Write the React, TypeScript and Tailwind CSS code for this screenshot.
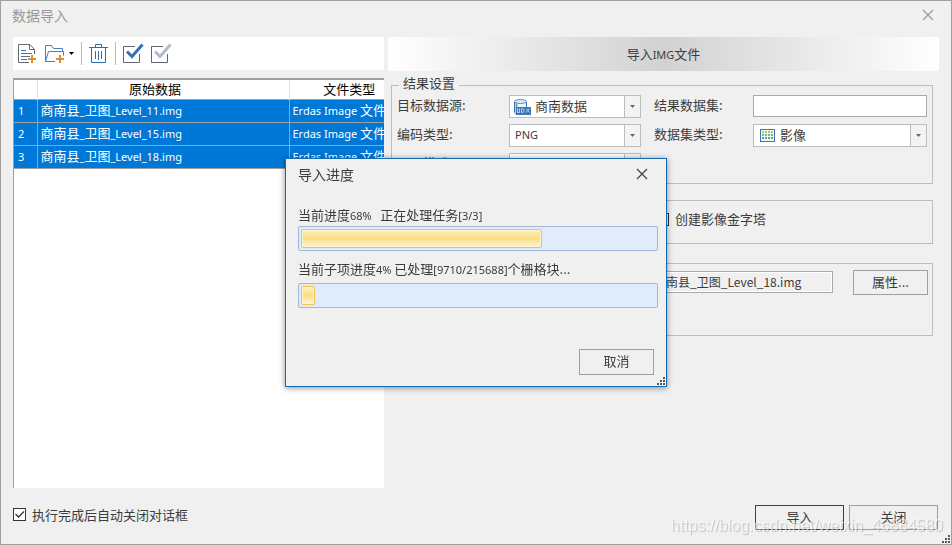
import type { ReactNode } from 'react';

const files = ['Level_11.img', 'Level_15.img', 'Level_18.img'];

function Latin({ children }: { children: ReactNode }) {
  return <span className="font-['Noto_Sans'] text-[11px]">{children}</span>;
}

function CloseIcon() {
  return (
    <svg width="12" height="12" viewBox="0 0 12 12" fill="none" stroke="currentColor" strokeWidth="1.1">
      <path d="M1 1l10 10M11 1L1 11" />
    </svg>
  );
}

function Grip() {
  return (
    <svg className="absolute right-0 bottom-0" width="9" height="9" viewBox="0 0 9 9" fill="#5a5a5a">
      <path d="M6 0h2v2H6zM3 3h2v2H3zM6 3h2v2H6zM0 6h2v2H0zM3 6h2v2H3zM6 6h2v2H6z" />
    </svg>
  );
}

function AddFileIcon() {
  return (
    <svg width="19" height="20" viewBox="0 0 19 20" fill="none">
      <path d="M16.500 10V5.500L12 .5H.5v18H11M11.500 .5v5h5" stroke="#666b73" />
      <path d="M3 6.500h5M3 9.500h11M3 12.500h9M3 15.500h6" stroke="#3f74b5" />
      <path d="M14 11v8M10 15h8" stroke="#e08e2f" strokeWidth="2" />
    </svg>
  );
}

function AddFolderIcon() {
  return (
    <svg width="20" height="20" viewBox="0 0 20 20" fill="none">
      <path d="M10 17.500H.5v-16h6l2 3h9v3M.5 17.500l3-10h15v4" stroke="#3f7fc4" />
      <path d="M15 11v8M11 15h8" stroke="#e08e2f" strokeWidth="2" />
    </svg>
  );
}

function TrashIcon() {
  return (
    <svg width="19" height="20" viewBox="0 0 19 20" fill="none" stroke="#2f6cad">
      <path d="M0 3.500h19M6.500 3V.5h6V3M2.500 4v14.500h14V4M6.500 7v8M9.500 7v9M12.500 7v8" />
    </svg>
  );
}

function CheckBoxIcon({ color }: { color: string }) {
  return (
    <svg width="21" height="21" viewBox="0 0 21 21" fill="none">
      <path d="M12 3.500H.5v16h16V11" stroke="#5d6672" />
      <path d="M4 8.500l5 5L19.500 1.500" stroke={color} strokeWidth="3" />
    </svg>
  );
}

function DatabaseIcon() {
  return (
    <svg width="17" height="16" viewBox="0 0 17 16" fill="none">
      <path d="M.5 3v10c0 1.500 3 2 5 2h7V3z" fill="#eef5fc" />
      <path d="M1.500 3v9c0 1 1 2 2 2V5z" fill="#6f9fd0" />
      <path d="M.5 3v10c0 1 1 2 2 2M12.500 3v6" stroke="#3f74b5" />
      <ellipse cx="6.500" cy="2.500" rx="6" ry="2" fill="#dceaf7" stroke="#5a8cc4" />
      <path d="M2 8h15v8H2z" fill="#3f74b5" />
      <path d="M3.500 9.500v4h2v-4M7.500 9.500v4h1l1.500-1v-2l-1.500-1zM12 9.500l3.500 4M15.500 9.500l-3.500 4" stroke="#b9d0ea" />
    </svg>
  );
}

function ImageGridIcon() {
  return (
    <svg className="ml-0.5" width="15" height="13" viewBox="0 0 15 13" fill="none">
      <rect x=".5" y=".5" width="14" height="12" fill="#f3faf0" stroke="#3f74b5" />
      <path d="M2 3h11" stroke="#9fce6a" strokeWidth="2" strokeDasharray="2 1" />
      <path d="M2 6h11" stroke="#7dbb8a" strokeWidth="2" strokeDasharray="2 1" />
      <path d="M2 9h11" stroke="#5b9fae" strokeWidth="2" strokeDasharray="2 1" />
    </svg>
  );
}

function CheckField({ children }: { children: ReactNode }) {
  return (
    <label className="flex items-center gap-1.5">
      <span className="relative flex">
        <input type="checkbox" defaultChecked className="size-[13px] appearance-none border border-[#333] bg-white" />
        <svg className="pointer-events-none absolute inset-0" width="13" height="13" viewBox="0 0 13 13" fill="none">
          <path d="M2.500 6l3 3L11 3.500" stroke="#333" strokeWidth="1.300" />
        </svg>
      </span>
      {children}
    </label>
  );
}

interface ComboProps {
  id: string;
  value: string;
  icon?: ReactNode;
  selectClass: string;
}

function Combo({ id, value, icon, selectClass }: ComboProps) {
  return (
    <div className="relative flex h-[23px] border border-[#bdbdbd] bg-white">
      <span className="pointer-events-none absolute inset-y-0 left-1 flex items-center">{icon}</span>
      <select id={id} className={`w-full appearance-none pb-0.5 outline-none ${selectClass}`}>
        <option>{value}</option>
      </select>
      <span className="pointer-events-none absolute inset-y-0 right-0 flex w-4 items-center justify-center border-l border-[#bdbdbd] bg-[#f3f3f3]">
        <svg width="5" height="3" viewBox="0 0 5 3" fill="#666">
          <path d="M0 0h5L2.500 3z" />
        </svg>
      </span>
    </div>
  );
}

function Progress({ label, percent }: { label: string; percent: number }) {
  return (
    <div
      role="progressbar"
      aria-label={label}
      aria-valuenow={percent}
      className="h-[25px] rounded-xs border border-[#a5b7d6] bg-[#e0ecfb] p-0.5"
    >
      <div
        className="h-full rounded-xs border border-[#ecc457] bg-linear-to-b from-[#fdf0c0] via-[#f9de82] to-[#fef6dc] inset-ring inset-ring-[#fff3cc]"
        style={{ width: `${percent}%` }}
      />
    </div>
  );
}

function FilePanel() {
  return (
    <div className="flex w-[371px] shrink-0 flex-col gap-2">
      <div className="flex h-[33px] items-center bg-white pl-[5px]">
        <button aria-label="添加文件"><AddFileIcon /></button>
        <button aria-label="添加文件夹" className="ml-2 flex items-center gap-1">
          <AddFolderIcon />
          <svg width="5" height="3" viewBox="0 0 5 3"><path d="M0 0h5L2.500 3z" /></svg>
        </button>
        <span className="ml-[7px] h-[23px] w-px bg-[#bbb]" />
        <button aria-label="删除" className="ml-[7px]"><TrashIcon /></button>
        <span className="ml-[7px] h-[23px] w-px bg-[#bbb]" />
        <button aria-label="全选" className="ml-[7px]"><CheckBoxIcon color="#3a72b0" /></button>
        <button aria-label="反选" className="ml-[7px]"><CheckBoxIcon color="#b4bccb" /></button>
      </div>
      <div className="flex-1 overflow-hidden border-t-2 border-l border-[#a0a0a0] bg-white">
        <table className="w-[395px] table-fixed border-collapse text-left">
          <thead>
            <tr className="h-[19px] text-center text-black">
              <th className="w-[23px] border-r border-[#e0e0e0]" />
              <th className="w-[252px] border-r border-[#e0e0e0] pr-4 font-normal leading-4">原始数据</th>
              <th className="font-normal leading-4">文件类型</th>
            </tr>
          </thead>
          <tbody className="bg-[#0078d7] text-white">
            {files.map((level, index) => (
              <tr key={level} className="h-[23px] border-y border-[#a0a0a0] leading-5">
                <td className="border-r border-[#a0a0a0] pl-1"><Latin>{index + 1}</Latin></td>
                <td className="border-r border-[#a0a0a0] pl-[3px]">
                  商南县<Latin>_</Latin>卫图<Latin>_{level}</Latin>
                </td>
                <td className="pl-[3px] whitespace-nowrap"><Latin>Erdas Image </Latin>文件</td>
              </tr>
            ))}
          </tbody>
        </table>
      </div>
    </div>
  );
}

function SettingsPanel() {
  return (
    <div className="flex min-w-0 flex-1 flex-col">
      <h2 className="flex h-[34px] items-center justify-center bg-linear-to-r from-white via-[#d2d2d2] to-white">
        <span>导入<Latin>IMG</Latin>文件</span>
      </h2>

      <div className="mt-1 mr-1.5 ml-[3px] flex flex-col">
        <fieldset className="min-w-0 border border-[#bdbdbd] px-[5px] pb-[7px]">
          <legend className="ml-0.5 px-1 pb-1 leading-4">结果设置</legend>
          <div className="grid grid-cols-[112px_132px_112px_1fr] gap-y-1.5 leading-5">
            <label htmlFor="datasource">目标数据源:</label>
            <Combo id="datasource" value="商南数据" icon={<DatabaseIcon />} selectClass="pl-[25px]" />
            <label htmlFor="dataset" className="pl-[13px]">结果数据集:</label>
            <input id="dataset" type="text" className="h-[22px] w-full min-w-0 border border-[#a9a9a9] bg-white px-1 outline-none" />

            <label htmlFor="encoding">编码类型:</label>
            <Combo id="encoding" value="PNG" selectClass="pl-[5px] font-['Noto_Sans'] text-[11px]" />
            <label htmlFor="dataset-type" className="pl-[13px]">数据集类型:</label>
            <Combo id="dataset-type" value="影像" icon={<ImageGridIcon />} selectClass="pl-[26px]" />

            <label htmlFor="mode">导入模式:</label>
            <Combo id="mode" value="" selectClass="pl-[5px]" />
          </div>
        </fieldset>

        <div className="mt-4 flex h-11 items-center border border-[#bdbdbd] pb-1.5 pl-[264px]">
          <CheckField>创建影像金字塔</CheckField>
        </div>

        <div className="mt-[19px] flex h-[73px] items-start justify-end gap-5 border border-[#bdbdbd] px-1 pt-1.5">
          <input
            readOnly
            aria-label="源文件"
            defaultValue="商南县_卫图_Level_18.img"
            className="mt-px h-[22px] w-[184px] border border-[#a9a9a9] bg-[#f0f0f0] px-1 pb-0.5 text-[12px] inset-ring inset-ring-white outline-none"
          />
          <button className="h-[25px] w-[75px] border border-[#a0a0a0] pb-0.5">属性...</button>
        </div>
      </div>
    </div>
  );
}

function ProgressDialog() {
  return (
    <div className="pointer-events-none fixed inset-0 flex items-center justify-center">
      <div
        role="dialog"
        aria-labelledby="progress-title"
        className="pointer-events-auto relative flex w-[382px] flex-col border border-[#0f6cb8] bg-[#f0f0f0] pr-2 pb-[11px] pl-3 shadow-[0_1px_6px_rgba(0,0,0,0.45)]"
      >
        <div className="flex h-[30px] items-center justify-between pr-2.5">
          <h2 id="progress-title" className="text-[14px]">导入进度</h2>
          <button aria-label="取消导入"><CloseIcon /></button>
        </div>
        <p className="mt-4 leading-5 whitespace-pre">
          当前进度<Latin>68%   </Latin>正在处理任务<Latin>[3/3]</Latin>
        </p>
        <Progress label="当前进度" percent={68} />
        <p className="mt-2 mb-[3px] leading-5">
          当前子项进度<Latin>4% </Latin>已处理<Latin>[9710/215688]</Latin>个栅格块...
        </p>
        <Progress label="当前子项进度" percent={4} />
        <button className="mt-[41px] mr-1 h-[26px] w-[75px] self-end border border-[#a0a0a0] pb-0.5">取消</button>
        <Grip />
      </div>
    </div>
  );
}

export default function App() {
  return (
    <div className="relative flex min-h-screen flex-col border border-[#a0a0a0] bg-[#f0f0f0] font-['Noto_Sans_CJK_SC',sans-serif] text-[13px] text-[#3c3c3c]">
      <header className="flex h-9 items-center justify-between pr-[17px] pb-2 pl-[11px] text-[#999]">
        <h1 className="text-[14px]">数据导入</h1>
        <button aria-label="关闭窗口"><CloseIcon /></button>
      </header>

      <main className="flex flex-1 gap-1 px-3">
        <FilePanel />
        <SettingsPanel />
      </main>

      <footer className="flex items-start gap-[5px] pt-[17px] pr-[13px] pb-3.5 pl-3">
        <CheckField>执行完成后自动关闭对话框</CheckField>
        <button className="ml-auto h-[25px] w-[89px] border border-[#404040] pb-0.5">导入</button>
        <button className="h-[25px] w-[89px] border border-[#a0a0a0] pb-0.5">关闭</button>
      </footer>
      <Grip />

      <ProgressDialog />
      <p className="pointer-events-none absolute right-2 bottom-1.5 font-['Liberation_Sans',sans-serif] text-base text-white/60 text-shadow-[1px_1px_1px_rgba(0,0,0,0.2)]">
        https://blog.csdn.net/weixin_46884580
      </p>
    </div>
  );
}
